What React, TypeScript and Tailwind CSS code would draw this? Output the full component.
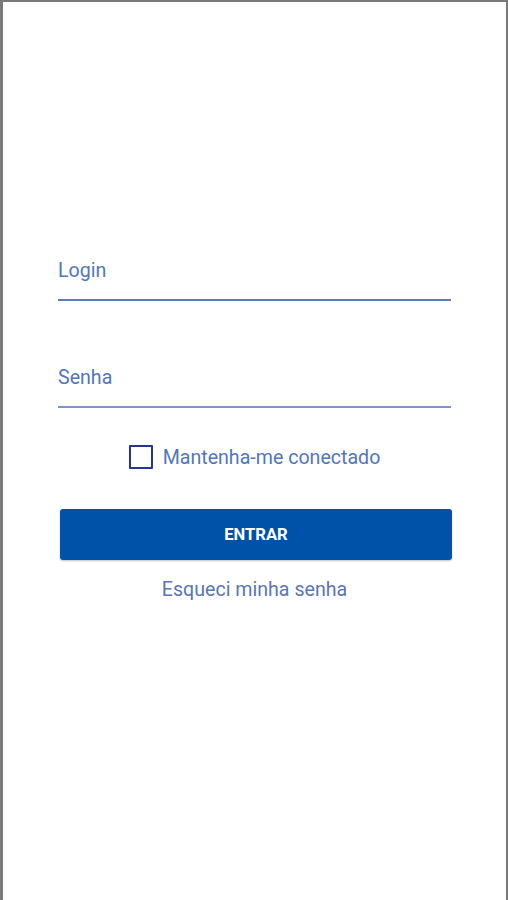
import React from "react";

export default function App() {
  return (
    <div
      className="w-[508px] h-[900px] bg-white border-l-[3px] border-t-[2px] border-r-[2px] border-[#7a7a7a] overflow-hidden"
      style={{ fontFamily: "Roboto, 'Liberation Sans', sans-serif" }}
    >
      <div className="flex flex-col pl-[55px] pr-[55px]">
        <div className="mt-[257px] pb-[16px] border-b-[2px] border-[#5d7dbf]">
          <div className="h-[24px] leading-[24px] text-[19.6px] text-[#5276bd]">Login</div>
        </div>
        <div className="mt-[65px] pb-[16px] border-b-[2px] border-[#7f95c8]">
          <div className="h-[24px] leading-[24px] text-[19.6px] text-[#5276bd]">Senha</div>
        </div>
        <div className="mt-[37px] flex items-center justify-center gap-[10px] h-[24px]">
          <div className="w-[24px] h-[24px] border-[2px] border-[#23359a] rounded-[1px] box-border" />
          <span className="text-[19.6px] leading-[24px] pt-[2px] text-[#5276bd]">Mantenha-me conectado</span>
        </div>
        <button className="mt-[40px] ml-[2px] mr-[-1px] h-[51px] pt-[2px] rounded-[3px] bg-[#0052a8] text-white font-bold text-[16.6px] shadow-[0_1px_2px_rgba(0,0,0,0.25)]">
          ENTRAR
        </button>
        <div className="mt-[18px] h-[24px] leading-[24px] text-center text-[19.6px] text-[#5a76b4]">
          Esqueci minha senha
        </div>
      </div>
    </div>
  );
}
